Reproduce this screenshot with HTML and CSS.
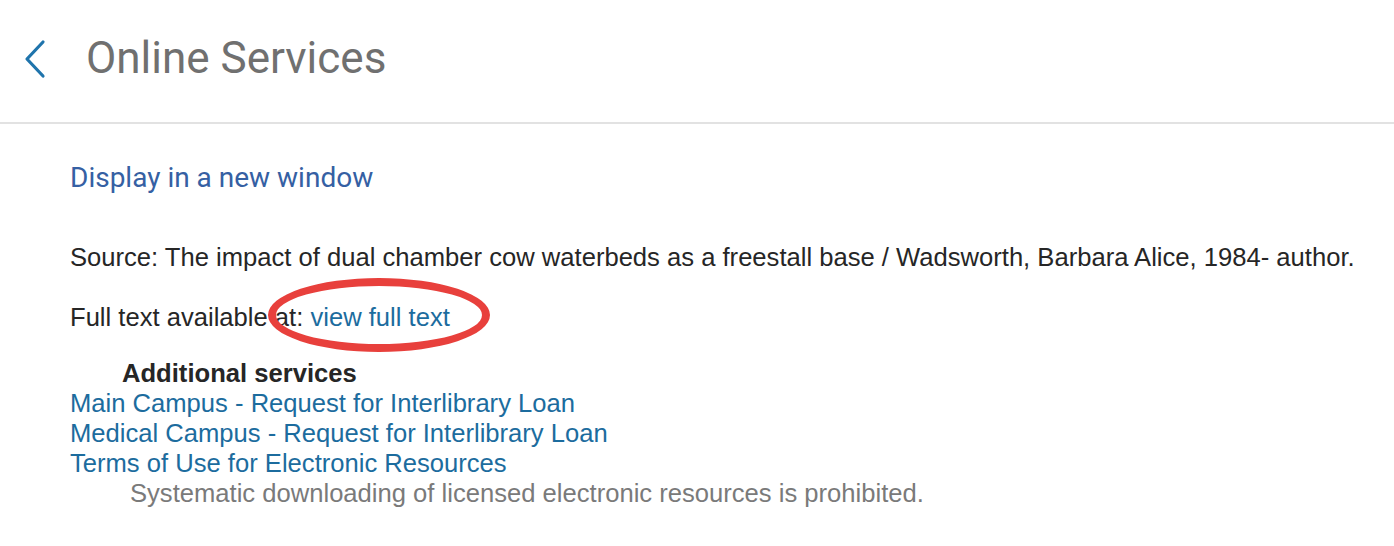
FILE: index.html
```html
<!DOCTYPE html>
<html>
<head>
<meta charset="utf-8">
<link rel="stylesheet" href="styles.css">
</head>
<body>
<header class="header">
  <a class="back" href="#" aria-label="Back">
    <svg width="26" height="40" viewBox="0 0 26 40"><path d="M21 3 L5 20 L21 37" fill="none" stroke="#1f74ac" stroke-width="3.2" stroke-linecap="round" stroke-linejoin="round"/></svg>
  </a>
  <h1 class="title">Online Services</h1>
</header>
<main class="content">
  <a class="display-link" href="#">Display in a new window</a>
  <p class="source">Source: The impact of dual chamber cow waterbeds as a freestall base / Wadsworth, Barbara Alice, 1984- author.</p>
  <p class="fulltext">Full text available at: <a class="link circled" href="#">view full text<span class="ellipse"></span></a></p>
  <div class="additional">
    <div class="add-title">Additional services</div>
    <a class="link block" href="#">Main Campus - Request for Interlibrary Loan</a>
    <a class="link block" href="#">Medical Campus - Request for Interlibrary Loan</a>
    <a class="link block" href="#">Terms of Use for Electronic Resources</a>
    <div class="note">Systematic downloading of licensed electronic resources is prohibited.</div>
  </div>
</main>
</body>
</html>
```
FILE: styles.css
```css
html, body { margin: 0; padding: 0; background: #fff; }
body { font-family: "Liberation Sans", Arial, sans-serif; color: #262626; }
.header {
  display: flex;
  align-items: center;
  height: 124px;
  border-bottom: 2px solid #e2e2e2;
  padding-left: 22px;
  box-sizing: border-box;
}
.back { display: flex; width: 64px; margin-top: -4px; }
.title {
  margin: 0;
  font-family: Roboto, sans-serif;
  font-weight: 400;
  font-size: 44px;
  color: #707070;
  margin-top: -6px;
}
.content { padding: 0 0 0 70px; }
.display-link {
  display: block;
  margin-top: 36px;
  font-family: Roboto, sans-serif;
  font-size: 28px;
  color: #3560a3;
  text-decoration: none;
  line-height: 36px;
}
.source { margin: 46px 0 0; font-size: 25.6px; line-height: 30px; }
.fulltext { margin: 30px 0 0; font-size: 25.6px; line-height: 30px; }
.link { color: #1c6c9e; text-decoration: none; }
.circled { position: relative; display: inline-block; }
.ellipse {
  position: absolute;
  left: -42px;
  top: -24px;
  width: 206px;
  height: 58px;
  border: 8px solid #e8403c;
  border-radius: 50%;
  pointer-events: none;
}
.additional { margin-top: 26px; font-size: 25.6px; line-height: 30px; }
.add-title { font-weight: 700; padding-left: 52px; }
.block { display: block; }
.note { color: #7a7a7a; padding-left: 60px; }
```
